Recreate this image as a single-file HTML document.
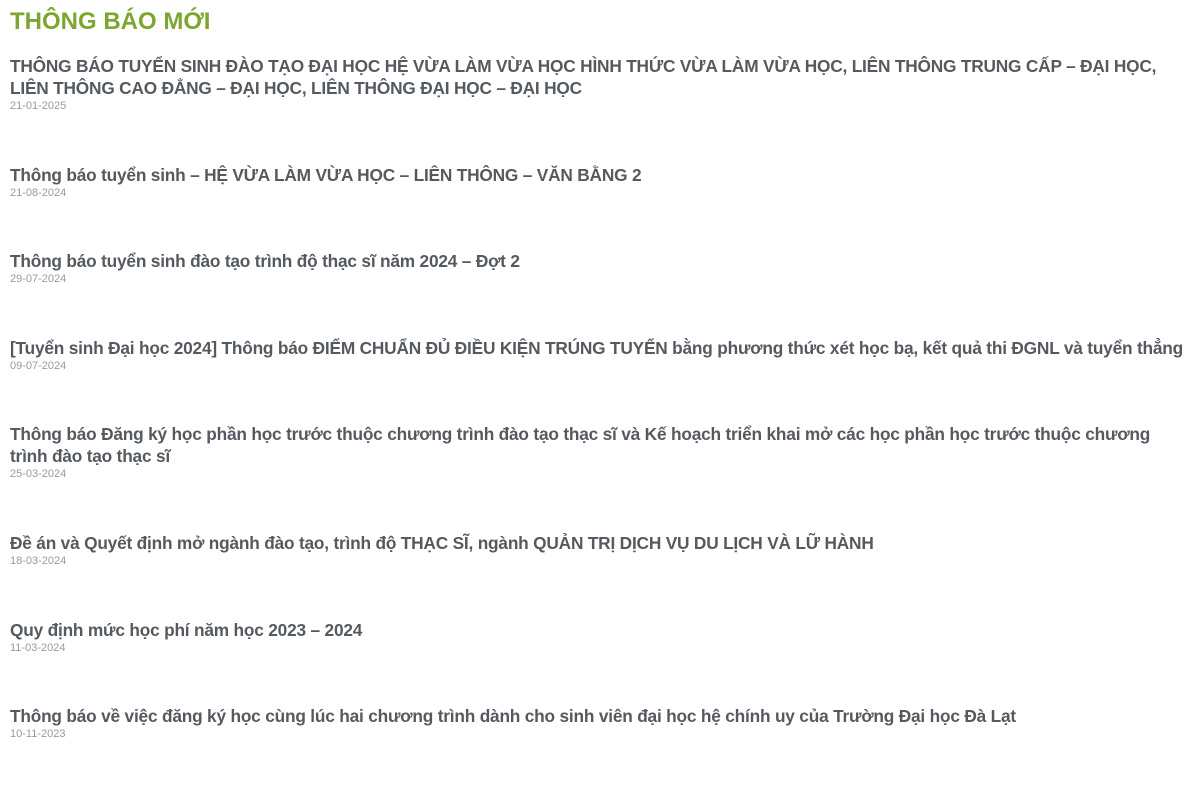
<!DOCTYPE html>
<html><head><meta charset="utf-8"><style>
body{margin:0;background:#fff;font-family:"Liberation Sans",Arial,sans-serif;}
.wrap{padding:0 10px;}
h2{margin:0;padding-top:8px;color:#7ba62f;font-size:24px;font-weight:bold;line-height:28px;height:47px;}
.item{margin-bottom:50.6px;}
.t{color:#555a60;font-size:17.3px;font-weight:bold;line-height:22px;white-space:nowrap;letter-spacing:-0.2px;}
.d{color:#9a9a9a;font-size:11px;line-height:14px;}
</style></head><body><div class="wrap">
<h2>THÔNG BÁO MỚI</h2>
<div class="item"><div class="t">THÔNG BÁO TUYỂN SINH ĐÀO TẠO ĐẠI HỌC HỆ VỪA LÀM VỪA HỌC HÌNH THỨC VỪA LÀM VỪA HỌC, LIÊN THÔNG TRUNG CẤP – ĐẠI HỌC,<br>LIÊN THÔNG CAO ĐẲNG – ĐẠI HỌC, LIÊN THÔNG ĐẠI HỌC – ĐẠI HỌC</div><div class="d">21-01-2025</div></div>
<div class="item"><div class="t">Thông báo tuyển sinh – HỆ VỪA LÀM VỪA HỌC – LIÊN THÔNG – VĂN BẰNG 2</div><div class="d">21-08-2024</div></div>
<div class="item"><div class="t">Thông báo tuyển sinh đào tạo trình độ thạc sĩ năm 2024 – Đợt 2</div><div class="d">29-07-2024</div></div>
<div class="item"><div class="t">[Tuyển sinh Đại học 2024] Thông báo ĐIỂM CHUẨN ĐỦ ĐIỀU KIỆN TRÚNG TUYỂN bằng phương thức xét học bạ, kết quả thi ĐGNL và tuyển thẳng</div><div class="d">09-07-2024</div></div>
<div class="item"><div class="t">Thông báo Đăng ký học phần học trước thuộc chương trình đào tạo thạc sĩ và Kế hoạch triển khai mở các học phần học trước thuộc chương<br>trình đào tạo thạc sĩ</div><div class="d">25-03-2024</div></div>
<div class="item"><div class="t">Đề án và Quyết định mở ngành đào tạo, trình độ THẠC SĨ, ngành QUẢN TRỊ DỊCH VỤ DU LỊCH VÀ LỮ HÀNH</div><div class="d">18-03-2024</div></div>
<div class="item"><div class="t">Quy định mức học phí năm học 2023 – 2024</div><div class="d">11-03-2024</div></div>
<div class="item"><div class="t">Thông báo về việc đăng ký học cùng lúc hai chương trình dành cho sinh viên đại học hệ chính uy của Trường Đại học Đà Lạt</div><div class="d">10-11-2023</div></div>
</div></body></html>
